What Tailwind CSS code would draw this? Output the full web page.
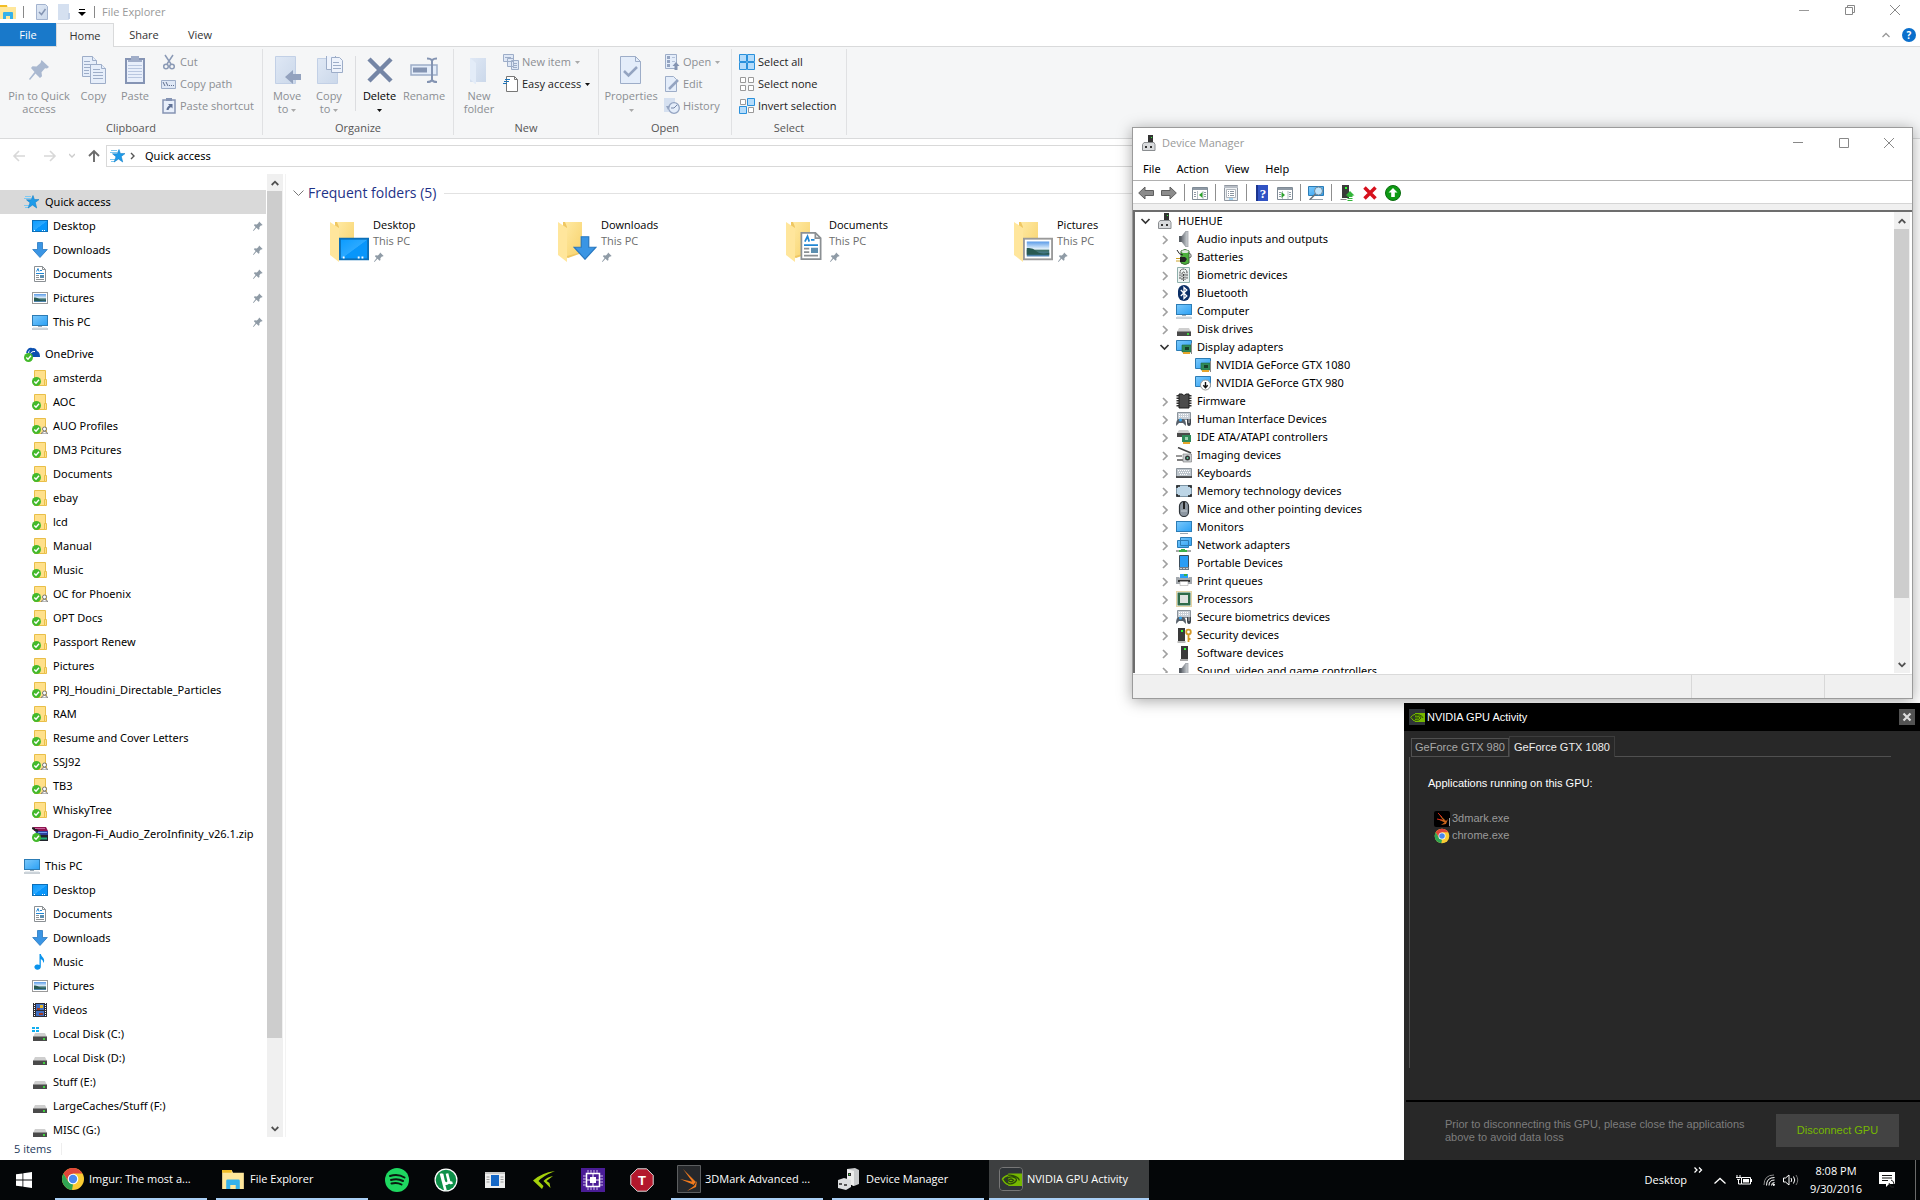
<!DOCTYPE html>
<html lang="en">
<head>
    <meta charset="UTF-8">
    <meta name="viewport" content="width=device-width, initial-scale=1.0">
    <title>Desktop</title>
    <script src="https://cdn.jsdelivr.net/npm/@tailwindcss/browser@4"></script>
</head>
<body class="h-screen overflow-hidden bg-white font-['Open_Sans','Noto_Sans',sans-serif] text-[11px] leading-4 text-black">

<!-- icon sprite -->
<svg class="absolute size-0">
    <defs>
        <linearGradient id="g-screen" x1="0" y1="0" x2="1" y2="1"><stop offset="0" stop-color="#7cc9fb"/><stop offset="1" stop-color="#2aa0f5"/></linearGradient>
        <linearGradient id="g-desk" x1="0" y1="0" x2="1" y2="1"><stop offset="0" stop-color="#0a9bff"/><stop offset=".5" stop-color="#2ba9ff"/><stop offset=".52" stop-color="#0896fb"/><stop offset="1" stop-color="#0896fb"/></linearGradient>
        <linearGradient id="g-fold" x1="0" y1="0" x2="1" y2="1"><stop offset="0" stop-color="#ffe9a2"/><stop offset="1" stop-color="#f7d26c"/></linearGradient>
        <linearGradient id="g-pale" x1="0" y1="0" x2="1" y2="1"><stop offset="0" stop-color="#dfe8f5"/><stop offset="1" stop-color="#cbd8ea"/></linearGradient>
        <linearGradient id="g-sky" x1="0" y1="0" x2="0" y2="1"><stop offset="0" stop-color="#5a9be8"/><stop offset=".5" stop-color="#e3f1fb"/><stop offset=".6" stop-color="#3f7169"/><stop offset="1" stop-color="#4f86b8"/></linearGradient>
        <linearGradient id="g-spk" x1="0" y1="0" x2="1" y2="0"><stop offset="0" stop-color="#6f757c"/><stop offset="1" stop-color="#d5d9dd"/></linearGradient>
    </defs>
    <symbol id="star" viewBox="0 0 16 16"><path d="M0 4.500h7M1 2.500h6M0 11.500h5M1 13.500h4" stroke="#7cc8f2" stroke-width="1"/><path d="M9 1.500l1.400 4.100h4.600l-3.700 2.900 1.400 5.500-4.200-3-4.300 3 1.800-5.300-3.500-2.900h4.700z" fill="#1e9be9" stroke="#1480c8" stroke-width=".6"/></symbol>
    <symbol id="desktop" viewBox="0 0 16 16"><rect x=".5" y="2.500" width="15" height="11" fill="url(#g-desk)" stroke="#0c6fb8"/><path d="M2 12.500h2M10 12.500h4" stroke="#fff" stroke-dasharray="1 1"/></symbol>
    <symbol id="down" viewBox="0 0 16 16"><path d="M5.500.5h5v7h4.800L8 15.500.7 7.500h4.800z" fill="#3a95e4" stroke="#2878c0" stroke-width=".8"/></symbol>
    <symbol id="doc" viewBox="0 0 16 16"><path d="M2.500.5h8l3 3v12h-11z" fill="#fff" stroke="#8b9094"/><path d="M10.500.5v3h3" fill="none" stroke="#8b9094"/><path d="M4.500 5.500L6 2.500l1 3M8 4.500h2M4 7.500h8" stroke="#1f86d4" fill="none"/><path d="M4 9.500h3M4 11.500h3M4 13.500h8" stroke="#8b9094"/><path d="M8 9h4v3H8z" fill="#5d8fb0"/></symbol>
    <symbol id="pic" viewBox="0 0 16 16"><rect x=".5" y="2.500" width="15" height="11" fill="#fff" stroke="#9a9a9a"/><rect x="2" y="4" width="12" height="8" fill="url(#g-sky)"/><path d="M2 7.500q3-.5 5 1.500t7 1v1H2z" fill="#285a52"/></symbol>
    <symbol id="pc" viewBox="0 0 16 16"><rect x=".5" y="1.500" width="15" height="10" fill="url(#g-screen)" stroke="#2c7cb5"/><path d="M6 12.500h4" stroke="#9aa8b3"/><path d="M0 15h16" stroke="#93a1ad"/><path d="M1 14h14" stroke="#d0d8de"/></symbol>
    <symbol id="monitor" viewBox="0 0 16 16"><rect x=".5" y="2.500" width="15" height="10" fill="url(#g-screen)" stroke="#2c7cb5"/><path d="M4 14.500h8" stroke="#9aa8b3"/></symbol>
    <symbol id="pin" viewBox="0 0 16 16"><path d="M9.500 2l4.700 4.600-1.400.8-1-.2-2 2.300.2 2.600-1.300.9-2.700-2.700L2 14.500l-.7-.5 3.500-4.600L2.500 7l1-1.200 2.900.2 2.200-2z" fill="#8f9ba6"/></symbol>
    <symbol id="ok" viewBox="0 0 16 16"><circle cx="4.500" cy="11.500" r="4.500" fill="#43b92b"/><path d="M2.300 11.500l1.700 1.700 3-3.400" stroke="#fff" stroke-width="1.400" fill="none"/></symbol>
    <symbol id="fold" viewBox="0 0 16 16"><path d="M2.500.5h11v15h-11z" fill="#ffe08a" stroke="#e9bf49"/><path d="M12.500 9.500h2v6h-2z" fill="#ffe08a" stroke="#e9bf49"/><use href="#ok"/></symbol>
    <symbol id="shared" viewBox="0 0 16 16"><use href="#fold"/><circle cx="12.500" cy="11" r="2" fill="#fff" stroke="#777"/><path d="M9.500 16q0-2.500 3-2.500t3 2.500z" fill="#fff" stroke="#777"/></symbol>
    <symbol id="onedrive" viewBox="0 0 16 16"><path d="M5 8Q5 2 9 2q3 0 4 3 3 1 3 6H5z" fill="#0c50b0"/><path d="M3 7q1-5 5-4" stroke="#0c50b0" stroke-width="2" fill="none"/><path d="M6 9q1-4 5-3.500" stroke="#fff" fill="none"/><use href="#ok"/></symbol>
    <symbol id="zip" viewBox="0 0 16 16"><path d="M1 1h13l2 4H2z" fill="#8e1550"/><path d="M3 5h13v4H5z" fill="#2c3f9c"/><path d="M3 9h13v6H5z" fill="#20242c"/><path d="M6 6.500h9" stroke="#6fa0f0"/><path d="M6 12.500h9" stroke="#22b07a" stroke-width="2"/><path d="M0 2l6 3" stroke="#222" stroke-width="2"/><path d="M3 2.500h10" stroke="#c8609a"/><use href="#ok"/></symbol>
    <symbol id="music" viewBox="0 0 16 16"><path d="M7.500 0h1.300q.5 2.300 2.500 4 1.600 2 .2 5-.2-3-2.700-4v8a3.200 2.600 0 1 1-1.300-2z" fill="#0a93ec"/></symbol>
    <symbol id="video" viewBox="0 0 16 16"><path d="M1 1h14v14H1z" fill="#2d2d35"/><path d="M4 2h8v6H4zM4 9h8v5H4z" fill="#3f6fc4"/><path d="M2.500 1v14M13.500 1v14" stroke="#fff" stroke-dasharray="1 1"/><path d="M8 3h3v3H8z" fill="#e3b62b"/><path d="M5 6h3v2H5zM7 11h4v2H7z" fill="#a33a1f"/></symbol>
    <symbol id="drive" viewBox="0 0 16 16"><path d="M3 7h10l2 4H1z" fill="#cfcfcf"/><path d="M1 10.500h14V15H1z" fill="#4a4a4a"/><path d="M11 13h2" stroke="#3cff3c" stroke-width="1.500"/></symbol>
    <symbol id="drivec" viewBox="0 0 16 16"><use href="#drive"/><path d="M0 1h3v2H0zM4 1h3v2H4zM0 4h3v2H0zM4 4h3v2H4z" fill="#11aef0"/></symbol>
    <symbol id="explorer" viewBox="0 0 16 14"><path d="M0 0h7l1 2h8v12H0z" fill="#ffe79b"/><path d="M0 0h7v2H0z" fill="#f2bd25"/><path d="M3 14V8q0-1 1-1h8q1 0 1 1v6h-3v-3H6v3z" fill="#35b1ea"/></symbol>
    <symbol id="page" viewBox="0 0 12 16"><path d="M.5.500h9l2 2v13h-11z" fill="url(#g-pale)" stroke="#a3b3cf"/></symbol>
    <symbol id="bigcopy" viewBox="0 0 28 28"><g stroke="#9dadc8" fill="#e6eefa"><path d="M2.500.5h10l4 4v16h-14z"/><path d="M12.500.5v4h4M4 5.500h6M4 8.500h8M4 11.500h6M4 14.500h5M4 17.500h5"/><path d="M10.500 8.500h11l4 4v15h-15z"/><path d="M21.500 8.500v4h4M13 13.500h7M13 16.500h10M13 19.500h10M13 22.500h10"/></g></symbol>
    <symbol id="bigpaste" viewBox="0 0 28 28"><path d="M5 3h18v24H5z" fill="#e8effb" stroke="#8594b4" stroke-width="2"/><path d="M10 0h8v4h-8z" fill="#a0adc8"/><path d="M7 5h14" stroke="#a0adc8" stroke-width="2"/><path d="M7 9.500h14M7 12.500h14M7 15.500h14M7 18.500h14M7 21.500h14" stroke="#b9c7e0"/></symbol>
    <symbol id="bigmove" viewBox="0 0 28 28"><path d="M2.500.5h20v27h-20z" fill="url(#g-pale)" stroke="#c2d0e6"/><path d="M12 21l8-7v4h8v6h-8v4z" fill="#93a2be"/></symbol>
    <symbol id="bigcopyto" viewBox="0 0 28 28"><path d="M2.500 2.500h20v25h-20z" fill="url(#g-pale)" stroke="#c2d0e6"/><g stroke="#9dadc8" fill="#eef3fc"><path d="M11.500-1.500h7l3 3v12h-10z"/><path d="M16.500 1.500h8l3 3v12h-11zM18 6.500h6M18 9.500h8M18 12.500h8"/></g></symbol>
    <symbol id="bigx" viewBox="0 0 28 28"><path d="M3 3l22 22M25 3L3 25" stroke="#7485a5" stroke-width="4.500"/></symbol>
    <symbol id="bigrename" viewBox="0 0 28 28"><path d="M1 9h26v10H1z" fill="#e3ecf9" stroke="#9dadc8" stroke-width="1.500"/><path d="M3 11.500h14v5H3z" fill="#8494b2"/><path d="M17 2.500q4 0 5 2 1-2 5-2M22 4v20M17 26q4 0 5-2 1 2 5 2" stroke="#8494b2" stroke-width="2" fill="none"/></symbol>
    <symbol id="bignew" viewBox="0 0 28 28"><path d="M5 2h16v24H5z" fill="url(#g-pale)"/><path d="M5 2l6 5v22l-6-6z" fill="#e3ecf8"/></symbol>
    <symbol id="bigprop" viewBox="0 0 28 28"><path d="M3.500.5h15l5 5v22h-20z" fill="#e4edfa" stroke="#9dadc8"/><path d="M18.500.5v5h5" fill="none" stroke="#9dadc8"/><path d="M7 15l4.500 4.500L20 11" stroke="#94a4c1" stroke-width="2.500" fill="none"/></symbol>
    <symbol id="cut" viewBox="0 0 16 16"><path d="M4 1l6 9M12 1L6 10" stroke="#8b9ab6" stroke-width="1.500"/><circle cx="5" cy="12.500" r="2.300" fill="none" stroke="#8b9ab6" stroke-width="1.500"/><circle cx="11" cy="12.500" r="2.300" fill="none" stroke="#8b9ab6" stroke-width="1.500"/></symbol>
    <symbol id="path" viewBox="0 0 16 16"><path d="M.5 4.500h14v8H.5z" fill="#dfe8f6" stroke="#9dadc8"/><path d="M2 6l2 4M5 6l2 4M8 9.500h1M10 9.500h1M12 9.500h1" stroke="#5f6f8f"/></symbol>
    <symbol id="shortcut" viewBox="0 0 16 16"><path d="M2 2h12v13H2z" fill="#e8effb" stroke="#8594b4" stroke-width="1.500"/><path d="M5 0h6v3H5z" fill="#8594b4"/><path d="M5.500 12q0-3 3-4.500L7 6h4.500v4.500L10 9q-2 1-2.500 3z" fill="#5f7196"/></symbol>
    <symbol id="newitem" viewBox="0 0 16 16"><g fill="#dfe8f6" stroke="#9dadc8"><path d="M.5.500h10v7H.5zM4.500 4.500h6v8h-6zM8.500 6.500h7v9h-7z"/><path d="M10 9.500h4M10 11.500h4M10 13.500h4M2 3.500h6"/></g></symbol>
    <symbol id="easy" viewBox="0 0 16 16"><path d="M3.500.5h8l3 3v12h-11z" fill="#fff" stroke="#777"/><path d="M11.500.5v3h3" fill="none" stroke="#777"/><path d="M2 3.500h5M1 5.500h5M0 7.500h4" stroke="#1c73b8"/></symbol>
    <symbol id="open" viewBox="0 0 16 16"><path d="M1.500.5h11v14h-11z" fill="#e4edfa" stroke="#9dadc8"/><path d="M3 2h3v3H3zM3 6h3v3H3zM3 10h3v3H3z" fill="#94a4c1"/><path d="M8 3.500h3M8 7.500h3" stroke="#b4c2da"/><path d="M12 8l3.500 4h-2v4h-3v-4h-2z" fill="#8494b2"/></symbol>
    <symbol id="edit" viewBox="0 0 16 16"><path d="M1.500.5h8l3 3v12h-11z" fill="#e4edfa" stroke="#9dadc8"/><path d="M5 13L14 4" stroke="#94a4c1" stroke-width="2.500"/></symbol>
    <symbol id="history" viewBox="0 0 16 16"><path d="M0 0h11v14H0z" fill="#d5e0f0"/><circle cx="10" cy="10" r="5.300" fill="#e4edfa" stroke="#94a4c1" stroke-width="1.300"/><path d="M10 10l3-3M10 10H7" stroke="#7485a5"/><path d="M2 8l4 0-2 4z" fill="#94a4c1"/></symbol>
    <symbol id="selall" viewBox="0 0 16 16"><g fill="#b5dcfb" stroke="#2a91dc"><path d="M.5.500h7v7h-7zM8.500.5h7v7h-7zM.5 8.500h7v7h-7zM8.500 8.500h7v7h-7z"/></g></symbol>
    <symbol id="selnone" viewBox="0 0 16 16"><g fill="#fff" stroke="#999"><path d="M1.500 1.500h5v5h-5zM9.500 1.500h5v5h-5zM1.500 9.500h5v5h-5zM9.500 9.500h5v5h-5z"/></g></symbol>
    <symbol id="selinv" viewBox="0 0 16 16"><g fill="#fff" stroke="#999"><path d="M1.500 1.500h5v5h-5zM9.500 9.500h5v5h-5z"/></g><g fill="#b5dcfb" stroke="#2a91dc"><path d="M8.500.5h7v7h-7zM.5 8.500h7v7h-7z"/></g></symbol>
    <symbol id="bigfold" viewBox="0 0 40 42"><path d="M6 1h19v31l-14 5-5-2z" fill="#efc762"/><path d="M8 1h17v30l-15 4V6z" fill="url(#g-fold)"/><path d="M1 1l9 6v34L1 34z" fill="#ffe69c"/></symbol>
    <symbol id="devmgr" viewBox="0 0 16 16"><path d="M7 0h5v8H7z" fill="#333"/><path d="M10 2h1v1h-1z" fill="#3f3"/><path d="M1.500 9.500L3 7.500h10l1 2v6H1.500z" fill="#d9dbdd" stroke="#8a8d90"/><path d="M4 11h2v2H4zM9 11h2v2H9z" fill="#333"/></symbol>
    <symbol id="speaker" viewBox="0 0 16 16"><path d="M3 5h3v6H3z" fill="#575d64"/><path d="M6 5l4-5h2v16h-2l-4-5z" fill="url(#g-spk)" stroke="#868c92" stroke-width=".6"/></symbol>
    <symbol id="battery" viewBox="0 0 16 16"><path d="M5 2q4-3 8 0v12q-4 3-8 0z" fill="#4cb13c" stroke="#3c6b37"/><ellipse cx="9" cy="2.500" rx="3.500" ry="1.500" fill="#dfe6df"/><path d="M13 4q3 1 2 4l-2 1" stroke="#555" fill="none"/><path d="M4 8h5l2 2-2 3H4z" fill="#222"/><path d="M0 9.500h4M0 12h4" stroke="#c9a227"/><path d="M1 1q2 5 6 5" stroke="#222" fill="none"/></symbol>
    <symbol id="finger" viewBox="0 0 16 16"><path d="M1.500.5h12v15h-12z" fill="#eef4f3" stroke="#8fb0ac"/><path d="M4 12V6q0-4 3.500-4T11 6v6M6 13V7q0-2 1.500-2T9 7v6M7.500 7v7" stroke="#444" fill="none" stroke-dasharray="2 .7"/></symbol>
    <symbol id="bt" viewBox="0 0 16 16"><rect x="2" y="0" width="12" height="16" rx="6" fill="#0b2f66"/><path d="M4.800 5l6 6L8 13.500v-11L10.800 5l-6 6" stroke="#fff" stroke-width="1.300" fill="none"/></symbol>
    <symbol id="display" viewBox="0 0 16 16"><path d="M.5 1.500h15v10H.5z" fill="url(#g-screen)" stroke="#2c7cb5"/><path d="M6 6h9v7H6z" fill="#2f8a58" stroke="#1f6540" stroke-width=".6"/><path d="M9 8h4v3H9z" fill="#173f2a"/><path d="M7 13h7v2H7z" fill="#e5a52b"/><path d="M15.500 4v11" stroke="#888"/></symbol>
    <symbol id="disabled" viewBox="0 0 16 16"><path d="M.5 1.500h15v10H.5z" fill="url(#g-screen)" stroke="#2c7cb5"/><circle cx="10.500" cy="10" r="5" fill="#fff" stroke="#999"/><path d="M10.500 7v5.500M8.300 10.300l2.200 2.400 2.200-2.400" stroke="#111" stroke-width="1.400" fill="none"/></symbol>
    <symbol id="chip" viewBox="0 0 16 16"><path d="M2 2v12M14 2v12" stroke="#333" stroke-width="3" stroke-dasharray="1.500 1"/><path d="M3 1h3l2 1.500L10 1h3v14H3z" fill="#4b4b4b" stroke="#1e1e1e"/></symbol>
    <symbol id="hid" viewBox="0 0 16 16"><path d="M1.500 1.500h13v7h-13z" fill="#c7ced6" stroke="#8b949c"/><path d="M3 3.500h10M3 5.500h10" stroke="#fff" stroke-dasharray="1 1"/><path d="M0 15q0-7 3-7h4q3 0 3 7l-3-3H3z" fill="#57606a"/><circle cx="4.500" cy="9" r="1.500" fill="#35a4ee"/><path d="M11 8h4v4q0 3-2 3t-2-3z" fill="#3d444c"/><path d="M13 8v4" stroke="#bbb"/></symbol>
    <symbol id="ide" viewBox="0 0 16 16"><path d="M3 1h9l2 3H1z" fill="#cfcfcf"/><path d="M1 4h13v4H1z" fill="#4a4a4a"/><path d="M6 6h9v7H6z" fill="#2f8a58"/><path d="M9 8h3v3H9z" fill="#9bd0ae"/><path d="M7 13h7v2H7z" fill="#e5a52b"/></symbol>
    <symbol id="imaging" viewBox="0 0 16 16"><path d="M2 .5l13 5.500" stroke="#444" stroke-width="1.500"/><path d="M0 8h6v2H0z" fill="#999"/><path d="M1 13h6" stroke="#555" stroke-width="1.500"/><path d="M7 7h8.500v8H7z" fill="#c9cdd0" stroke="#777" stroke-width=".6"/><circle cx="11.500" cy="11" r="2.500" fill="#333"/><circle cx="11.500" cy="11" r="1" fill="#5fd0a0"/></symbol>
    <symbol id="keyb" viewBox="0 0 16 16"><path d="M.5 3.500h15v9H.5z" fill="#bdc5cc" stroke="#8b949c"/><path d="M2 5.500h12M3 7.500h11M4 9.500h8" stroke="#fff" stroke-dasharray="1 1"/><path d="M0 12h16" stroke="#333" stroke-width="1.500"/></symbol>
    <symbol id="memory" viewBox="0 0 16 16"><path d="M.5 2.500h15v11H.5z" fill="#bcd5e6" stroke="#7d95a6"/><path d="M1 5V3h3M12 3h3v2M1 11v2h3M12 13h3v-2" stroke="#222" stroke-width="1.500" fill="none"/></symbol>
    <symbol id="mouse" viewBox="0 0 16 16"><rect x="3.500" y=".5" width="9" height="15" rx="4.500" fill="#8d97a1" stroke="#2e343a" stroke-width="1.200"/><path d="M8 1v7" stroke="#222" stroke-width="2"/><path d="M5 10h6" stroke="#c4ccd3"/></symbol>
    <symbol id="net" viewBox="0 0 16 16"><path d="M4.500.5h11v8h-11zM1.500 3.500h11v7h-11z" fill="url(#g-screen)" stroke="#2c7cb5"/><path d="M0 14h15" stroke="#a9a9a9" stroke-width="2"/><path d="M3 13h8v2H3zM5 12h4v2H5z" fill="#3cb04a"/></symbol>
    <symbol id="portable" viewBox="0 0 16 16"><path d="M3.500.5h9v14h-9z" fill="#2a9df4" stroke="#3b4d5c"/><path d="M3 12h10v3H3z" fill="#6f7b85"/><path d="M4 13.500h8" stroke="#ccc" stroke-dasharray="2 1"/></symbol>
    <symbol id="printer" viewBox="0 0 16 16"><path d="M4 1h8v4H4z" fill="#2aa0f5"/><path d="M8 1h3v2H8z" fill="#36b14a"/><path d="M0 4h3l1 1h8l1-1h3v7H0z" fill="#a3a8ad"/><path d="M2 7h12v2H2z" fill="#333"/><path d="M4 8.500h8v4H4z" fill="#fff" stroke="#aaa" stroke-width=".6"/></symbol>
    <symbol id="cpu" viewBox="0 0 16 16"><path d="M.5.500h15v15H.5z" fill="none" stroke="#c9a84a" stroke-dasharray="1 1"/><path d="M1.500 1.500h13v13h-13z" fill="#2f6b49"/><path d="M4 4h8v8H4z" fill="#dfe2df"/></symbol>
    <symbol id="security" viewBox="0 0 16 16"><path d="M2 1h7v13H2z" fill="#3a3a3a"/><path d="M1.500 15h8" stroke="#777"/><path d="M5 3h2v2H5z" fill="#3f3"/><circle cx="12.500" cy="5" r="2.300" fill="none" stroke="#d59a2a" stroke-width="1.800"/><path d="M12.500 7v8M12.500 12h2" stroke="#d59a2a" stroke-width="1.800"/></symbol>
    <symbol id="software" viewBox="0 0 16 16"><path d="M5 1h7v13H5z" fill="#3a3a3a"/><path d="M4 15h8" stroke="#555"/><path d="M8 3h2v2H8z" fill="#3f3"/></symbol>
    <symbol id="arrL" viewBox="0 0 16 16"><path d="M.7 8L7 2v3.500h8.500v5H7V14z" fill="#8b8b8b" stroke="#5e5e5e"/></symbol>
    <symbol id="arrR" viewBox="0 0 16 16"><path d="M15.300 8L9 2v3.500H.5v5H9V14z" fill="#8b8b8b" stroke="#5e5e5e"/></symbol>
    <symbol id="console" viewBox="0 0 16 16"><path d="M.5 2.500h15v12H.5z" fill="#fff" stroke="#7f8b96"/><path d="M1 4h14" stroke="#8f9aa5" stroke-width="2"/><path d="M2 7.500h2M2 9.500h2M2 11.500h2M12 7.500h2M12 9.500h2M12 11.500h2" stroke="#8f9aa5"/><path d="M5.500 6v8M11 6v8" stroke="#b3bcc4"/></symbol>
    <symbol id="tree" viewBox="0 0 16 16"><use href="#console"/><path d="M10.500 7v6L7 10z" fill="#2fa32f"/></symbol>
    <symbol id="action" viewBox="0 0 16 16"><use href="#console"/><path d="M4.500 7v6L8 10z" fill="#2fa32f"/></symbol>
    <symbol id="props" viewBox="0 0 16 16"><path d="M1.500.5h13v15h-13z" fill="#eef1f4" stroke="#9097a0"/><path d="M1 2h14" stroke="#b8bec6" stroke-width="2"/><path d="M3.500 4.500h9v8h-9z" fill="#fff" stroke="#b0b6bd"/><path d="M5 6.500h1M7 6.500h4M5 8.500h1M7 8.500h4M5 10.500h1M7 10.500h4" stroke="#8b95a0"/><path d="M6 14h4" stroke="#58b6ef"/></symbol>
    <symbol id="help" viewBox="0 0 16 16"><path d="M2 0h12v16H2z" fill="#3153c4"/><path d="M2 0h2v16H2z" fill="#1b348f"/><text x="9" y="13" font-size="13" font-weight="bold" font-family="Liberation Serif" fill="#fff" text-anchor="middle">?</text></symbol>
    <symbol id="scan" viewBox="0 0 16 16"><path d="M.5 1.500h15v9H.5z" fill="url(#g-screen)" stroke="#2c7cb5"/><path d="M1 14.500h14" stroke="#93a1ad"/><circle cx="10.500" cy="6" r="4" fill="#bfe4fc" stroke="#738a9b"/><path d="M7.500 9L2 14.500" stroke="#68747e" stroke-width="1.600"/></symbol>
    <symbol id="update" viewBox="0 0 16 16"><path d="M3 0h7v13H3z" fill="#3a3a3a"/><path d="M1.500 14.500h6" stroke="#888"/><path d="M6 2h2v2H6z" fill="#3f3"/><path d="M11 6l4.500 4.500h-2V12h-5v-1.500h-2zM8.500 13h5v1h-5zM8.500 15h5v1h-5z" fill="#33b53a"/></symbol>
    <symbol id="redx" viewBox="0 0 16 16"><path d="M2.500 2.500l11 11M13.500 2.500l-11 11" stroke="#d6111d" stroke-width="3.500"/></symbol>
    <symbol id="greenup" viewBox="0 0 16 16"><circle cx="8" cy="8" r="7.500" fill="#0e9a14" stroke="#0b6d10"/><path d="M8 3l4.500 4.500h-2.700V12H6.200V7.500H3.500z" fill="#fff"/></symbol>
    <symbol id="nvidia" viewBox="0 0 16 16"><path d="M0 0h16v16H0z" fill="#2f3438"/><path d="M6 4h10v9H6z" fill="#76b900"/><path d="M1.500 8.500Q5 4 9.500 5.500T14 9M4 9q2-3 5-2.500T12 9q-2 3-5 2.500T2.500 8.500M6 9q2-2 4 0-2 2-4 0" stroke="#2a4a08" fill="none" stroke-width=".9"/><path d="M1.500 8.500Q3 6 6 5.300M2 8.500Q4 12 6 12" stroke="#76b900" fill="none"/></symbol>
    <symbol id="mark3d" viewBox="0 0 24 28"><path d="M.5.500h23v27H.5z" fill="#26282b" stroke="#5c5e60"/><path d="M6 4l13 13-2 2zM3 14l14 3v3zM20 16l-1 6-9 4 7-5z" fill="#f27a1d"/></symbol>
    <symbol id="chrome" viewBox="0 0 24 24"><circle cx="12" cy="12" r="11" fill="#f9cb33"/><path d="M2.500 6.500A11 11 0 0 1 21.500 6.500H12L7.500 15z" fill="#e0453a"/><path d="M2.500 6.500L7.300 14.800 12 17.500 11 23A11 11 0 0 1 2.500 6.500z" fill="#30a453"/><circle cx="12" cy="12" r="5.300" fill="#fff"/><circle cx="12" cy="12" r="4.200" fill="#4a87ee"/></symbol>
</svg>

<div class="flex h-full flex-col">

    <!-- File Explorer -->
    <main class="flex min-h-0 flex-1 flex-col">
        <header class="flex h-[23px] shrink-0 items-center text-[#999]">
            <svg class="h-[14px] w-4"><use href="#explorer"/></svg>
            <i class="mr-3 ml-[7px] h-3 w-px bg-[#888]"></i>
            <button aria-label="Properties" class="relative mr-2.5 h-4 w-3"><svg class="size-full"><use href="#page"/></svg><svg class="absolute inset-0 size-full" viewBox="0 0 12 16"><path d="M3 8l2.500 2.500L9.500 5" stroke="#8494b2" stroke-width="1.500" fill="none"/></svg></button>
            <button aria-label="New folder" class="mr-2 h-4 w-3"><svg class="size-full" viewBox="0 0 12 16"><path d="M0 0h11v16H0z" fill="#d5e0f0"/><path d="M10 9h2v6h-2z" fill="#c2d0e6"/></svg></button>
            <button aria-label="Customize toolbar"><svg class="size-2" viewBox="0 0 8 8"><path d="M1 1.500h6" stroke="#000"/><path d="M0 4h8L4 8z"/></svg></button>
            <i class="mr-[7px] ml-2 h-3 w-px bg-[#888]"></i>
            <h1>File Explorer</h1>
            <div class="ml-auto flex items-center pb-1">
                <button aria-label="Minimize" class="w-[46px]"><svg class="mx-auto size-[10px]" viewBox="0 0 10 10"><path d="M0 5.500h10" stroke="#999"/></svg></button>
                <button aria-label="Restore" class="w-[45px]"><svg class="mx-auto size-[10px]" viewBox="0 0 10 10" fill="none" stroke="#888"><path d="M.5 2.500h7v7h-7zM2.500 2.500v-2h7v7h-2"/></svg></button>
                <button aria-label="Close" class="w-[46px]"><svg class="mx-auto size-[10px]" viewBox="0 0 10 10"><path d="M0 0l10 10M10 0L0 10" stroke="#888"/></svg></button>
                <i class="w-[2px]"></i>
            </div>
        </header>

        <nav class="flex h-6 shrink-0 items-stretch border-b border-[#d9dadb] text-[#333]">
            <button class="w-14 bg-[#1979ca] text-white">File</button>
            <button class="-mb-px w-[58px] border border-b-0 border-[#d9dadb] bg-[#f5f6f7]">Home</button>
            <button class="w-[60px]">Share</button>
            <button class="w-[52px]">View</button>
            <div class="ml-auto flex items-center gap-3 pr-1">
                <button aria-label="Collapse ribbon"><svg class="h-[6px] w-2" viewBox="0 0 8 6"><path d="M.5 5L4 1.500 7.500 5" stroke="#999" stroke-width="1.300" fill="none"/></svg></button>
                <button aria-label="Help" class="size-[14px] rounded-full bg-[#0a6fcc] text-[10px] leading-[14px] font-bold text-white">?</button>
            </div>
        </nav>

        <section id="ribbon" class="flex h-[92px] shrink-0 border-b border-[#d9dadb] bg-[#f5f6f7] pt-[2px] pb-[3px]"></section>

        <div class="flex h-[35px] shrink-0 items-center pr-4 pb-[2px]">
            <button aria-label="Back" class="ml-3 mr-[17px]"><svg class="size-[14px]" viewBox="0 0 14 14"><path d="M13 7H2M7 2L2 7l5 5" stroke="#d8d8d8" stroke-width="1.600" fill="none"/></svg></button>
            <button aria-label="Forward" class="mr-3"><svg class="size-[14px]" viewBox="0 0 14 14"><path d="M1 7h11M7 2l5 5-5 5" stroke="#d8d8d8" stroke-width="1.600" fill="none"/></svg></button>
            <button aria-label="Recent" class="mr-3"><svg class="size-[6px]" viewBox="0 0 6 6"><path d="M0 1l3 3 3-3" stroke="#ccc" stroke-width="1.300" fill="none"/></svg></button>
            <button aria-label="Up" class="mr-[5px]"><svg class="size-[14px]" viewBox="0 0 14 14"><path d="M7 13V2M2 7l5-5 5 5" stroke="#6b6b6b" stroke-width="1.900" fill="none"/></svg></button>
            <div class="flex h-[22px] flex-1 items-center border border-[#d9d9d9] pl-[3px]">
                <svg class="size-4"><use href="#star"/></svg>
                <svg class="mx-1 h-2 w-[6px]" viewBox="0 0 6 8"><path d="M1 1l3 3-3 3" stroke="#555" stroke-width="1.400" fill="none"/></svg>
                <a href="#" class="ml-[5px] font-['Noto_Sans',sans-serif]">Quick access</a>
            </div>
        </div>

        <div class="flex min-h-0 flex-1">
            <nav class="w-[266px] overflow-hidden pt-4 font-['Noto_Sans',sans-serif]">
                <ul id="nav"></ul>
            </nav>
            <div class="ml-px flex w-4 flex-col bg-[#f0f0f0]">
                <button aria-label="Scroll up" class="flex h-[17px] shrink-0 items-center justify-center"><svg class="h-[6px] w-2" viewBox="0 0 8 6"><path d="M.7 5L4 1.700 7.300 5" stroke="#505050" stroke-width="1.800" fill="none"/></svg></button>
                <div class="mr-px h-[88%] bg-[#cdcdcd]"></div>
                <button aria-label="Scroll down" class="mt-auto flex h-[17px] shrink-0 items-center justify-center"><svg class="h-[6px] w-2" viewBox="0 0 8 6"><path d="M.7 1L4 4.300 7.300 1" stroke="#505050" stroke-width="1.800" fill="none"/></svg></button>
            </div>
            <section class="ml-[2px] flex-1 border-l border-[#f3f3f3] pt-[9px] pl-[7px]">
                <h2 class="flex items-center text-[14px] leading-5 text-[#1e3287]">
                    <svg class="mr-1 h-[7px] w-[11px]" viewBox="0 0 11 7"><path d="M.5.500l5 5 5-5" stroke="#777" fill="none"/></svg>
                    Frequent folders (5)
                    <i class="mr-4 ml-2 h-px flex-1 bg-[#e2e2e2]"></i>
                </h2>
                <div id="tiles" class="flex pt-[14px] pl-9"></div>
            </section>
        </div>

        <footer class="flex h-[23px] shrink-0 items-center pl-[14px] text-[#1e395b]">5 items<i class="ml-2.5 h-3 w-px bg-[#eee]"></i></footer>
    </main>

    <!-- Taskbar -->
    <footer class="flex h-10 shrink-0 items-stretch bg-[#040608] text-white">
        <button aria-label="Start" class="mr-2 flex w-[47px] items-center justify-center"><svg class="size-4" viewBox="0 0 16 16" fill="#fff"><path d="M0 2.300L6.500 1.400v6.200H0zM7.300 1.300L16 0v7.600H7.300zM0 8.400h6.500v6.200L0 13.700zM7.300 8.400H16V16l-8.700-1.300z"/></svg></button>
        <button class="mr-[9px] flex w-[152px] items-center gap-1 border-b-2 border-[#a9cef4] pl-[6px]"><svg class="size-6"><use href="#chrome"/></svg>Imgur: The most a...</button>
        <button class="mr-1 flex w-[152px] items-center gap-[6px] border-b-2 border-[#a9cef4] pl-[6px]"><svg class="h-[19px] w-[22px]"><use href="#explorer"/></svg>File Explorer</button>
        <button aria-label="Spotify" class="flex w-[49px] items-center justify-center"><svg class="size-6" viewBox="0 0 24 24"><circle cx="12" cy="12" r="12" fill="#1ed760"/><path d="M5 8q8-2.500 14.500 1.500M6 12q6.500-2 12 1M6.500 15.500q5.500-1.500 10 1" stroke="#0a1a10" stroke-width="2" fill="none" stroke-linecap="round"/></svg></button>
        <button aria-label="uTorrent" class="flex w-[49px] items-center justify-center"><svg class="size-6" viewBox="0 0 24 24"><circle cx="12" cy="12" r="11.500" fill="#fff"/><circle cx="12" cy="12" r="10.300" fill="#0d8f48"/><path d="M7 5.500l4.500 17M8 6l1.500 7q1 3 3.500 2.500 2.500-1 1.500-4L13 5.500M14.800 13q.8 2.500 3.700 1.500" stroke="#fff" stroke-width="2.700" fill="none"/></svg></button>
        <button aria-label="Window app" class="flex w-[49px] items-center justify-center"><svg class="h-4 w-5" viewBox="0 0 20 16"><path d="M0 0h20v16H0z" fill="#eee"/><path d="M0 0h20v2H0z" fill="#c9c9c9"/><path d="M6 3h8v11H6z" fill="#1668c7"/><path d="M1.500 5h3M1.500 7.500h3M1.500 10h3M15.500 5h3M15.500 7.500h3M15.500 10h3" stroke="#999"/></svg></button>
        <button aria-label="Razer" class="flex w-[49px] items-center justify-center"><svg class="h-[18px] w-[22px]" viewBox="0 0 22 18"><path d="M22 0Q8 2 0 9.500L9 18l1.500-3-5-5Q10 5 22 0zM20 5q-6 1-9.500 5l7 7-1-5-3-2z" fill="#a5d10b"/></svg></button>
        <button aria-label="CPU-Z" class="flex w-[49px] items-center justify-center"><svg class="size-6" viewBox="0 0 24 24"><path d="M0 0h24v24H0z" fill="#4a1c96"/><path d="M5.500 5.500h13v13h-13z" fill="none" stroke="#fff" stroke-width="1.500"/><path d="M9 9h6v6H9z" fill="#fff"/><path d="M7 2v3M10 2v3M13 2v3M16 2v3M7 19v3M10 19v3M13 19v3M16 19v3M2 8h3M2 11h3M2 14h3M2 17h3M19 8h3M19 11h3M19 14h3M19 17h3" stroke="#cdbbe9"/><path d="M12 6v3M12 15v3M6 12h3M15 12h3" stroke="#fff"/></svg></button>
        <button aria-label="T app" class="mr-[5px] flex w-[49px] items-center justify-center"><svg class="size-6" viewBox="0 0 24 24"><path d="M7.300.8h9.400l6.500 6.500v9.400l-6.500 6.500H7.300L.8 16.700V7.300z" fill="#b3182c" stroke="#ddd"/><text x="12" y="16.500" font-size="13" font-weight="bold" font-family="Liberation Sans" fill="#fff" text-anchor="middle">T</text></svg></button>
        <button class="mr-[9px] flex w-[152px] items-center gap-1 border-b-2 border-[#a9cef4] pl-[6px]"><svg class="h-7 w-6"><use href="#mark3d"/></svg>3DMark Advanced ...</button>
        <button class="mr-[5px] flex w-[152px] items-center gap-[6px] border-b-2 border-[#a9cef4] pl-[6px]"><svg class="size-[22px]" viewBox="0 0 22 22"><path d="M9 1l8-1 4 2v14l-5 2-7-3z" fill="#c9cbcd"/><path d="M9 1l7 2v15l-7-3z" fill="#eceded"/><path d="M0 12l6-2 7 2v7l-5 3-8-2z" fill="#dcdedf"/><path d="M10 5h3v3h-3z" fill="#333"/><path d="M1 15h3v2H1zM6 16h3v2H6z" fill="#555"/><path d="M11 6h1v1h-1z" fill="#3f3"/></svg>Device Manager</button>
        <button class="flex w-[160px] items-center gap-1 border-b-2 border-[#a9cef4] bg-[#3d3f40] pl-[10px]"><svg class="size-6 rounded-sm border border-[#777]"><use href="#nvidia"/></svg>NVIDIA GPU Activity</button>
        <div class="ml-auto flex items-center">
            <span>Desktop</span>
            <svg class="mr-[11px] ml-[7px] h-[6px] w-[9px] self-start mt-[7px]" viewBox="0 0 9 6"><path d="M.5.500L3 3 .5 5.500M5 .5L7.500 3 5 5.500" stroke="#fff" stroke-width="1.300" fill="none"/></svg>
            <button aria-label="Show hidden icons" class="mr-[10px]"><svg class="h-[7px] w-3" viewBox="0 0 12 7"><path d="M.5 6.500l5.500-5 5.500 5" stroke="#fff" stroke-width="1.300" fill="none"/></svg></button>
            <svg class="mr-[11px] h-[10px] w-4" viewBox="0 0 16 10"><path d="M5.500 2.500h9v6.500h-9z" fill="none" stroke="#fff"/><path d="M7 4h6v3.500H7zM15 4h1v3h-1z" fill="#fff"/><path d="M1 0v2M4 0v2M0 2.500h5M1 4q1.500 2 3 0M2.500 4v5h3" stroke="#fff" fill="none"/></svg>
            <svg class="mr-2 size-3" viewBox="0 0 12 12" fill="none" stroke="#fff"><path d="M1 11Q1 1 11 1" stroke="#888"/><path d="M3.500 11.500q0-8 8-8M6 11.500Q6 6 11.500 6M8.500 11.500q0-3 3-3"/><circle cx="10.700" cy="10.700" r=".8" fill="#fff"/></svg>
            <svg class="mr-[10px] h-3 w-4" viewBox="0 0 16 12" fill="none" stroke="#fff"><path d="M.5 4h2L6 1v10L2.500 8h-2z"/><path d="M8 4q1.500 2 0 4M10.500 2.500q2.500 3.500 0 7"/><path d="M13 1q3.500 5 0 10" stroke="#777"/></svg>
            <time class="w-[54px] text-center leading-[18px]">8:08 PM<br>9/30/2016</time>
            <button aria-label="Notifications" class="ml-4 mr-[20px]"><svg class="size-4" viewBox="0 0 16 16"><path d="M0 0h16v12h-6l-3 3v-3H0z" fill="#fff"/><path d="M3 3.500h10M3 6h10M3 8.500h6" stroke="#111"/><path d="M12 8q3 1 3 4M10 11l2 4h3" stroke="#222" fill="none"/></svg></button>
            <i class="mr-1 h-full w-px bg-[#6a6a6a]"></i>
        </div>
    </footer>
</div>

<!-- Device Manager window -->
<section class="absolute top-[127px] left-[1132px] flex h-[572px] w-[781px] flex-col border border-[#9b9b9b] bg-white shadow-[0_2px_14px_rgba(0,0,0,0.35)]">
    <header class="flex h-[30px] shrink-0 items-center pl-2 text-[#999]">
        <svg class="mr-[5px] size-4"><use href="#devmgr"/></svg>
        <h2>Device Manager</h2>
        <div class="ml-auto flex">
            <button aria-label="Minimize" class="w-[46px]"><svg class="mx-auto size-[10px]" viewBox="0 0 10 10"><path d="M0 4.500h10" stroke="#888"/></svg></button>
            <button aria-label="Maximize" class="w-[45px]"><svg class="mx-auto size-[10px]" viewBox="0 0 10 10"><path d="M.5.500h9v9h-9z" stroke="#888" fill="none"/></svg></button>
            <button aria-label="Close" class="w-[46px]"><svg class="mx-auto size-[10px]" viewBox="0 0 10 10"><path d="M0 0l10 10M10 0L0 10" stroke="#888"/></svg></button>
        </div>
    </header>
    <nav class="flex h-[23px] shrink-0 items-center gap-4 border-b border-[#b0b0b0] pl-2.5 font-['Noto_Sans',sans-serif]">
        <button>File</button><button>Action</button><button>View</button><button>Help</button>
    </nav>
    <div id="toolbar" class="flex h-[23px] shrink-0 items-center gap-[7px] border-b border-[#d5d5d5] pt-px pl-[5px]"></div>
    <div class="h-[6px] shrink-0 bg-[#f0f0f0]"></div>
    <div class="flex min-h-0 flex-1 border-t-2 border-l-2 border-[#6d6d6d] pr-[2px] font-['Noto_Sans',sans-serif]">
        <ul id="devices" class="flex-1 overflow-hidden"></ul>
        <div class="flex w-4 flex-col bg-[#f0f0f0]">
            <button aria-label="Scroll up" class="flex h-[17px] shrink-0 items-center justify-center"><svg class="h-[6px] w-2" viewBox="0 0 8 6"><path d="M.7 5L4 1.700 7.300 5" stroke="#505050" stroke-width="1.800" fill="none"/></svg></button>
            <div class="mr-px h-4/5 bg-[#cdcdcd]"></div>
            <button aria-label="Scroll down" class="mt-auto flex h-[17px] shrink-0 items-center justify-center"><svg class="h-[6px] w-2" viewBox="0 0 8 6"><path d="M.7 1L4 4.300 7.300 1" stroke="#505050" stroke-width="1.800" fill="none"/></svg></button>
        </div>
    </div>
    <footer class="mt-px flex h-6 shrink-0 justify-end border-t border-[#dadada] bg-[#f0f0f0]">
        <i class="w-[133px] border-l border-[#d8d8d8]"></i><i class="w-[88px] border-l border-[#d8d8d8]"></i>
    </footer>
</section>

<!-- NVIDIA GPU Activity window -->
<section class="absolute top-[703px] right-0 bottom-10 flex w-[516px] flex-col bg-[#282828] font-['Liberation_Sans',Arial,sans-serif] text-[11px] leading-[13px]">
    <header class="flex h-7 shrink-0 items-center bg-black pr-[5px] pl-[5px] text-white">
        <svg class="mr-[2px] size-4"><use href="#nvidia"/></svg>
        <h2>NVIDIA GPU Activity</h2>
        <button aria-label="Close" class="ml-auto size-4 bg-[#525252]"><svg class="size-4" viewBox="0 0 16 16"><path d="M4.500 4.500l7 7M11.500 4.500l-7 7" stroke="#ddd" stroke-width="2.200"/></svg></button>
    </header>
    <div class="flex items-end pt-[5px] pl-[5px]">
        <button class="ml-[2px] h-[19px] w-[98px] border border-[#505050] text-[#a8a8a8]">GeForce GTX 980</button>
        <button class="h-[21px] w-[106px] border border-b-0 border-[#3d3d3d] bg-[#282828] text-[#eee]">GeForce GTX 1080</button>
        <i class="mr-[29px] flex-1 border-b border-[#505050]"></i>
    </div>
    <div class="ml-[5px] h-[311px] border-l border-[#505050] pt-5 pl-[18px] text-white">
        <p>Applications running on this GPU:</p>
        <ul class="mt-5 ml-[6px] text-[#9a9a9a]">
            <li class="flex h-[17px] items-center gap-[2px]"><svg class="size-4" viewBox="0 0 16 16"><rect width="16" height="16" rx="2" fill="#000"/><path d="M4 2l7 7-1 1.500zM3 8l9 1.500v2.500zM14 8l-2 5-5 1 4-3z" fill="#c8641a"/><path d="M4 2l4 4M3 8l5 1" stroke="#d62a1a"/><path d="M15.500 7v8" stroke="#999"/></svg>3dmark.exe</li>
            <li class="flex h-[17px] items-center gap-[2px]"><svg class="size-4"><use href="#chrome"/></svg>chrome.exe</li>
        </ul>
    </div>
    <footer class="mt-auto ml-[2px] flex h-[60px] items-center justify-between border-t-2 border-black pb-px pr-[21px] pl-[39px] text-[#7d7d7d]">
        <p class="w-[300px]">Prior to disconnecting this GPU, please close the applications above to avoid data loss</p>
        <button class="h-[33px] w-[123px] bg-[#434343] text-[#76b900]">Disconnect GPU</button>
    </footer>
</section>

<script>
    const icon = (name, cls = 'size-4') => `<svg class="${cls} shrink-0 overflow-visible"><use href="#${name}"/></svg>`
    const caret = (color) => `<svg class="inline h-[3px] w-[5px]" viewBox="0 0 5 3"><path d="M0 0h5L2.500 3z" fill="${color}"/></svg>`

    // ribbon: big buttons carry an icon over a label, small ones are stacked in threes
    const big = (ic, label, width, opt = {}) => `<button class="flex shrink-0 flex-col items-center pt-[5px] ${opt.on ? 'text-black' : 'text-[#8b8e93]'}" style="width:${width}px">
        ${icon(ic, 'size-7')}<span class="mt-[5px] leading-[13px]">${label}</span></button>`
    const small = (ic, label, opt = {}) => `<button class="flex h-[22px] items-center gap-[3px] whitespace-nowrap ${opt.on ? 'text-[#222]' : 'text-[#8b8e93]'}">
        ${icon(ic)}<span>${label}</span>${opt.menu ? '<span class="ml-px flex">' + caret(opt.on ? '#111' : '#aaa') + '</span>' : ''}</button>`
    const group = (title, width, body) => `<div class="flex flex-col border-r border-[#e0e1e3] pt-[2px]" style="width:${width}px">
        <div class="flex h-[71px]">${body}</div><div class="text-center leading-[15px] text-[#555]">${title}</div></div>`

    document.getElementById('ribbon').innerHTML =
        group('Clipboard', 263,
            `<button class="flex w-[78px] flex-col items-center pt-[5px] text-[#8b8e93]"><svg class="size-7" viewBox="0 0 28 28"><path d="M16.500 4l7.500 7-2 1.500-2-.2-3.500 4 .5 4-2 1.700-4.500-4.500L5 24l-1-1 5.500-7L6 12l1.500-1.700 4 .3 4-3.600z" fill="#a9b8d0"/></svg><span class="mt-[5px] leading-[13px]">Pin to Quick<br>access</span></button>` +
            big('bigcopy', 'Copy', 31) + big('bigpaste', 'Paste', 52) +
            `<div>${small('cut', 'Cut')}${small('path', 'Copy path')}${small('shortcut', 'Paste shortcut')}</div>`) +
        group('Organize', 191,
            `<i class="w-1"></i>` + big('bigmove', 'Move<br>to ' + caret('#aaa'), 40) + big('bigcopyto', 'Copy<br>to ' + caret('#aaa'), 44) +
            `<i class="mt-[5px] ml-1 h-[55px] w-px bg-[#dcdde0]"></i>` + big('bigx', 'Delete<br>' + caret('#111'), 47, { on: true }) + big('bigrename', 'Rename', 42)) +
        group('New', 145,
            `<i class="w-1"></i>` + big('bignew', 'New<br>folder', 42) +
            `<div class="ml-[3px]">${small('newitem', 'New item', { menu: true })}${small('easy', 'Easy access', { on: true, menu: true })}</div>`) +
        group('Open', 133,
            `<i class="w-[2px]"></i>` + big('bigprop', 'Properties<br>' + caret('#aaa'), 60) +
            `<div class="ml-[3px]">${small('open', 'Open', { menu: true })}${small('edit', 'Edit')}${small('history', 'History')}</div>`) +
        group('Select', 115,
            `<div class="ml-[7px]">${small('selall', 'Select all', { on: true })}${small('selnone', 'Select none', { on: true })}${small('selinv', 'Invert selection', { on: true })}</div>`)

    // navigation pane: [icon, label, kind]
    const nav = [
        ['star', 'Quick access', 'active'],
        ['desktop', 'Desktop', 'pinned'], ['down', 'Downloads', 'pinned'], ['doc', 'Documents', 'pinned'], ['pic', 'Pictures', 'pinned'], ['pc', 'This PC', 'pinned'],
        ['onedrive', 'OneDrive', 'root'],
        ['fold', 'amsterda'], ['fold', 'AOC'], ['shared', 'AUO Profiles'], ['fold', 'DM3 Pcitures'], ['fold', 'Documents'], ['fold', 'ebay'], ['fold', 'lcd'],
        ['fold', 'Manual'], ['fold', 'Music'], ['shared', 'OC for Phoenix'], ['fold', 'OPT Docs'], ['fold', 'Passport Renew'], ['fold', 'Pictures'],
        ['shared', 'PRJ_Houdini_Directable_Particles'], ['fold', 'RAM'], ['fold', 'Resume and Cover Letters'], ['shared', 'SSJ92'], ['shared', 'TB3'], ['fold', 'WhiskyTree'],
        ['zip', 'Dragon-Fi_Audio_ZeroInfinity_v26.1.zip'],
        ['pc', 'This PC', 'root'],
        ['desktop', 'Desktop'], ['doc', 'Documents'], ['down', 'Downloads'], ['music', 'Music'], ['pic', 'Pictures'], ['video', 'Videos'],
        ['drivec', 'Local Disk (C:)'], ['drive', 'Local Disk (D:)'], ['drive', 'Stuff (E:)'], ['drive', 'LargeCaches/Stuff (F:)'], ['drive', 'MISC (G:)'],
    ]
    const navKinds = { active: 'pl-6 bg-[#d9d9d9]', root: 'pl-6 mt-2', pinned: 'pl-8', plain: 'pl-8' }
    document.getElementById('nav').innerHTML = nav.map(([ic, label, kind = 'plain']) =>
        `<li class="${navKinds[kind]}"><a href="#" class="flex h-6 items-center gap-[5px] whitespace-nowrap">${icon(ic)}${label}${kind === 'pinned' ? icon('pin', 'ml-auto mr-0.5 size-3') : ''}</a></li>`).join('')

    // frequent folder tiles with the badge that sits over each folder
    const tiles = [['Desktop', 'desktop'], ['Downloads', 'down'], ['Documents', 'doc'], ['Pictures', 'pic']]
    document.getElementById('tiles').innerHTML = tiles.map(([label, badge]) =>
        `<a href="#" class="flex w-[228px] gap-1"><span class="relative mt-1 h-[42px] w-10">${icon('bigfold', 'h-[42px] w-10')}
        ${icon(badge, badge === 'doc' ? 'absolute right-0 bottom-[3px] size-7' : badge === 'down' ? 'absolute right-0 bottom-[3px] size-6' : 'absolute right-0 -bottom-px size-[30px]')}</span>
        <span><span class="block">${label}</span><span class="block text-[#6d6d6d]">This PC</span>${icon('pin', 'size-3 mt-[2px]')}</span></a>`).join('')

    const tools = ['arrL', 'arrR', '|', 'tree', '|', 'props', '|', 'help', 'action', '|', 'scan', '|', 'update', 'redx', 'greenup']
    document.getElementById('toolbar').innerHTML = tools.map(t => t === '|' ? '<i class="h-[17px] w-px bg-[#8f8f8f]"></i>' : `<button aria-label="${t}">${icon(t)}</button>`).join('')

    // device tree: [level, icon, label, open]
    const devices = [
        [0, 'devmgr', 'HUEHUE', true], [1, 'speaker', 'Audio inputs and outputs'], [1, 'battery', 'Batteries'], [1, 'finger', 'Biometric devices'],
        [1, 'bt', 'Bluetooth'], [1, 'pc', 'Computer'], [1, 'drive', 'Disk drives'], [1, 'display', 'Display adapters', true],
        [2, 'display', 'NVIDIA GeForce GTX 1080'], [2, 'disabled', 'NVIDIA GeForce GTX 980'], [1, 'chip', 'Firmware'], [1, 'hid', 'Human Interface Devices'],
        [1, 'ide', 'IDE ATA/ATAPI controllers'], [1, 'imaging', 'Imaging devices'], [1, 'keyb', 'Keyboards'], [1, 'memory', 'Memory technology devices'],
        [1, 'mouse', 'Mice and other pointing devices'], [1, 'monitor', 'Monitors'], [1, 'net', 'Network adapters'], [1, 'portable', 'Portable Devices'],
        [1, 'printer', 'Print queues'], [1, 'cpu', 'Processors'], [1, 'hid', 'Secure biometrics devices'], [1, 'security', 'Security devices'],
        [1, 'software', 'Software devices'], [1, 'speaker', 'Sound, video and game controllers'],
    ]
    const indent = ['pl-[6px]', 'pl-[25px]', 'pl-11']
    const openMark = '<path d="M.5 3L4.500 7l4-4" stroke="#333" stroke-width="1.700" fill="none"/>'
    const shutMark = '<path d="M3 2l4 4-4 4" stroke="#a0a0a0" stroke-width="1.700" fill="none"/>'
    document.getElementById('devices').innerHTML = devices.map(([level, ic, label, open]) =>
        `<li class="flex h-[18px] items-center whitespace-nowrap ${indent[level]}"><svg class="mr-[7px] h-2.5 w-[9px] overflow-visible" viewBox="0 0 9 10">${level === 2 ? '' : open ? openMark : shutMark}</svg>${icon(ic)}<span class="ml-[5px]">${label}</span></li>`).join('')
</script>
</body>
</html>
